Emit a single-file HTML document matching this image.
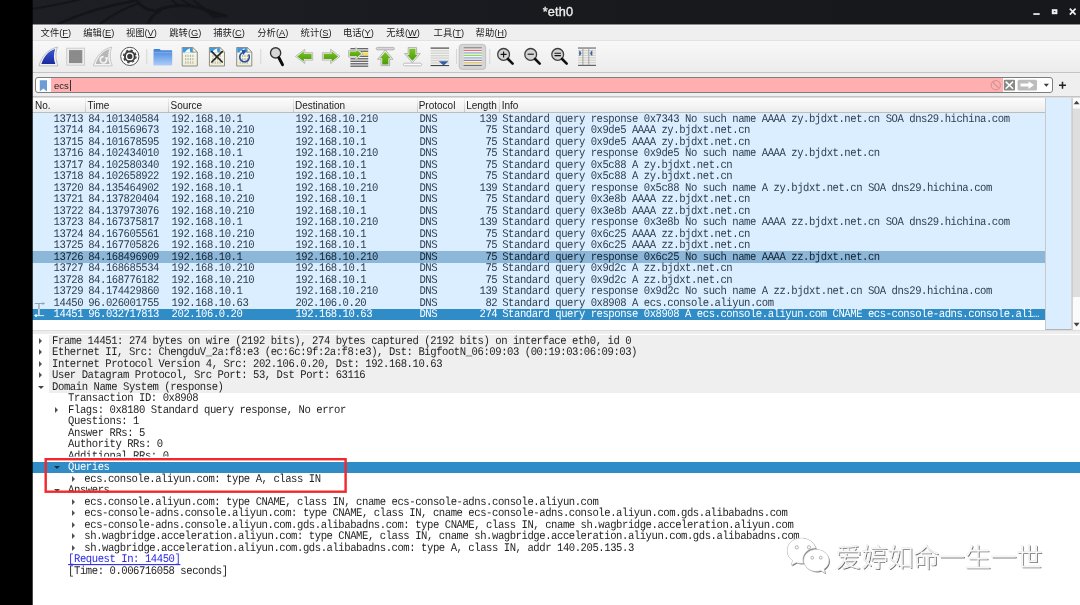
<!DOCTYPE html>
<html lang="zh-CN">
<head>
<meta charset="utf-8">
<title>*eth0</title>
<style>
*{box-sizing:border-box;margin:0;padding:0}
html,body{width:1080px;height:605px;overflow:hidden;background:#fff}
body{position:relative;font-family:"Liberation Sans","Noto Sans CJK SC",sans-serif;font-size:10px;color:#222}
.abs{position:absolute}
#wrap{position:absolute;left:0;top:0;width:1080px;height:605px;will-change:transform}
#black{z-index:50;left:0;top:0;width:33px;height:605px;background:linear-gradient(90deg,#000 0,#000 32px,rgba(0,0,0,.72) 32px,rgba(0,0,0,.72) 33px)}
#title{left:32px;top:0;width:1048px;height:24px;background:linear-gradient(90deg,#1e1f25 0,#1b1c21 300px,#18191d 600px,#17181c 100%);overflow:hidden}
#title .tt{position:absolute;left:506px;top:4px;width:40px;text-align:center;color:#ededed;font-size:12.7px;letter-spacing:0.2px;-webkit-text-stroke:0.35px #ededed;line-height:16px;white-space:nowrap}
#menubar{left:32px;top:24px;width:1048px;height:17px;background:#efefef;border-bottom:1px solid #e2e2e2;box-shadow:inset 0 1px 0 #8b8c90,inset 0 2px 0 #f6f6f6}
#menubar span{position:absolute;top:3px;line-height:13px;font-size:9.3px;white-space:nowrap;color:#1d1d1d;margin-left:-0.4px}
#menubar u{text-decoration-thickness:1px;text-underline-offset:1px}
#toolbar{left:32px;top:41px;width:1048px;height:32px;background:linear-gradient(#f8f8f8,#ececec);border-bottom:1px solid #c4c4c4}
#toolbar svg{position:absolute}
.sep{position:absolute;top:9px;width:1px;height:15px;background:#d2d2d2}
#filterbar{left:32px;top:73px;width:1048px;height:24px;background:#efefef;border-bottom:1px solid #c3c3c3}
#finput{position:absolute;left:3px;top:4px;width:1018px;height:16px;border:1px solid #7d7d7d;border-radius:3px;background:#fff;overflow:hidden}
#finput .pink{position:absolute;left:14.5px;top:0;width:952px;height:14px;background:#ffafaf}
#finput .txt{position:absolute;left:18px;top:1px;line-height:14px;font-size:9.5px;color:#222}
#finput .caret{position:absolute;left:34.2px;top:2px;width:1px;height:10.5px;background:#333}
#list{left:32px;top:97px;width:1048px;height:234px;background:#fff;box-shadow:inset 0 1px 0 #dcdcdc}
#lhead{position:absolute;left:0;top:1px;width:1013px;height:15.3px;background:linear-gradient(#fdfdfd,#ececec);border-bottom:1px solid #bdbdbd}
#lhead span{position:absolute;top:1.7px;line-height:12px;font-size:10px;color:#222;white-space:nowrap}
#lhead i{position:absolute;top:0;width:1px;height:14px;background:linear-gradient(#f4f4f4,#c4c4c4)}
.r{position:absolute;left:32px;width:1013px;height:11.5px;background:#daeeff;font-family:"Liberation Mono",monospace;font-size:10.6px;letter-spacing:-0.458px;line-height:11.5px;color:#2e3e50;white-space:pre}
.r.rel{background:#8cb7d9;color:#12222f}
.r.sel{background:#308cc6;color:#fff}
.r .c{position:absolute;top:1.4px;transform:scaleY(1.1);transform-origin:50% 74%;text-rendering:geometricPrecision}
.no{left:21.6px}.tm{left:56.2px}.sr{left:139.6px}.ds{left:263.4px}.pr{left:387.4px}.ln{right:547.8px}.inf{left:470.2px}
#mini{position:absolute;left:1013px;top:1px;width:26.5px;height:232px;background:#daeeff;border-left:1px solid #c9c9c9;border-bottom:1px solid #b5b5b5;border-right:1px solid #d6d6d6}
#vsb{position:absolute;left:1040px;top:1px;width:8px;height:232px;background:#fff}
#split{left:32px;top:330px;width:1048px;height:5px;background:#ededed;border-top:1px solid #dcdcdc;border-bottom:1px solid #d8d8d8}
#detail{left:32px;top:334px;width:1048px;height:271px;background:#fff}
.d{position:absolute;left:32px;width:1048px;height:11.5px;font-family:"Liberation Mono",monospace;font-size:10.6px;letter-spacing:-0.449px;line-height:11.5px;color:#1f1f1f;white-space:pre}
.d .t{position:absolute;top:1.7px;margin-left:-32.2px;transform:scaleY(1.1);transform-origin:50% 74%;text-rendering:geometricPrecision}
.d.top::before{content:"";position:absolute;left:17px;top:0;right:0;height:12px;background:#efefef}
.d.dsel{background:#308cc6;color:#fff}
.d.lnk{color:#2a2ae8}
.d.lnk .t{text-decoration:underline;text-decoration-thickness:0.9px;text-decoration-skip-ink:none;text-underline-offset:1.6px}
.ar{position:absolute;top:2.9px;margin-left:-32.2px;width:0;height:0;border-left:3.7px solid #505050;border-top:3.2px solid transparent;border-bottom:3.2px solid transparent}
.ad{position:absolute;top:4.6px;margin-left:-32px;width:0;height:0;border-top:3.9px solid #444;border-left:3.5px solid transparent;border-right:3.5px solid transparent}
.dsel .ad{border-top-color:#1c2e3c}
#wm{left:786px;top:538px;width:270px;height:40px}
</style>
</head>
<body>
<div id="wrap">
<div id="black" class="abs"></div>
<div id="title" class="abs">
<svg class="abs" style="left:0;top:0" width="240" height="24" viewBox="32 0 240 24"><g fill="none" stroke="#141519" stroke-linecap="round"><path d="M32 9 C50 6 66 3 82 -1" stroke-width="2.2"/><path d="M58 24 C80 14 104 6 134 1" stroke-width="2.6"/><path d="M100 24 C112 15 124 8 140 3" stroke-width="2.2"/><path d="M136 0 C140 6 146 10 156 11 C168 5 186 4 200 8 C210 11 218 14 226 16" stroke-width="3"/><path d="M148 24 C150 18 154 14 160 11" stroke-width="2.6"/><path d="M172 0 L178 5 M182 0 L190 5 M194 1 L204 8" stroke-width="2"/><path d="M204 10 L224 16 L214 18 Z" fill="#141519" stroke-width="1"/></g></svg>
<div class="tt">*eth0</div>
<svg class="abs" style="left:1000px;top:5px" width="46" height="14" viewBox="0 0 46 14"><rect x="1.3" y="8.2" width="6.4" height="1.7" fill="#f0f0f0"/><rect x="20.8" y="5.2" width="3.6" height="3" fill="none" stroke="#f0f0f0" stroke-width="2"/><path d="M37.8 3.6 L43.6 9.6 M43.6 3.6 L37.8 9.6" stroke="#f0f0f0" stroke-width="1.6" fill="none"/></svg>
</div>
<div id="menubar" class="abs">
<span style="left:9px">文件(<u>F</u>)</span>
<span style="left:51.7px">编辑(<u>E</u>)</span>
<span style="left:94.3px">视图(<u>V</u>)</span>
<span style="left:137.7px">跳转(<u>G</u>)</span>
<span style="left:181.7px">捕获(<u>C</u>)</span>
<span style="left:225.7px">分析(<u>A</u>)</span>
<span style="left:269px">统计(<u>S</u>)</span>
<span style="left:311.3px">电话(<u>Y</u>)</span>
<span style="left:354.7px">无线(<u>W</u>)</span>
<span style="left:402px">工具(<u>T</u>)</span>
<span style="left:444px">帮助(<u>H</u>)</span>
</div>
<div id="toolbar" class="abs">
<svg class="abs" style="left:0;top:0" width="1048" height="32" viewBox="32 41 1048 32">
<defs>
<linearGradient id="gb" x1="0" y1="0" x2="0" y2="1"><stop offset="0" stop-color="#3c57d6"/><stop offset="1" stop-color="#1a2a9c"/></linearGradient>
<linearGradient id="gf" x1="0" y1="0" x2="0" y2="1"><stop offset="0" stop-color="#3b7dd6"/><stop offset="0.25" stop-color="#5b95e2"/><stop offset="1" stop-color="#afcdf8"/></linearGradient>
<linearGradient id="gg" x1="0" y1="0" x2="0" y2="1"><stop offset="0" stop-color="#7cc425"/><stop offset="1" stop-color="#4b9a08"/></linearGradient>
<linearGradient id="gp" x1="0" y1="0" x2="0" y2="1"><stop offset="0" stop-color="#fbfbf0"/><stop offset="1" stop-color="#efeed4"/></linearGradient>
<g id="page">
<path d="M0.5 0.5 H11 L15.6 5 V19 H0.5 Z" fill="url(#gp)" stroke="#8d8d84" stroke-width="1"/>
<path d="M1 1 H10.8 L12.5 5.4 H1 Z" fill="#3d9be2"/>
<path d="M3.2 5.4 C4.5 3.3 6.3 1.9 8.6 1.2 C7.8 2.6 8 4 9 5.4 Z" fill="#fff"/>
<path d="M11 0.5 V5 H15.6 Z" fill="#fdfdf6" stroke="#8d8d84" stroke-width="0.8"/>
<g stroke="#b9b9ae" stroke-width="2.2" stroke-dasharray="1.2 1.2"><path d="M3.4 8.8 H13"/><path d="M3.4 12.2 H13"/><path d="M3.4 15.6 H13"/></g>
</g>
<g id="lens"><circle cx="0" cy="0" r="5.9" fill="#d3d3d3" stroke="#3e3e3e" stroke-width="1.3"/><path d="M4.4 4.6 L9 9.2" stroke="#111" stroke-width="2.6" stroke-linecap="round"/></g>
</defs>
<!-- fin start -->
<path d="M39 65.9 C41.5 56.5 47.5 49.5 57.5 47 C55.2 53 55.4 59.5 58 65.9 Z" fill="#f4f4f4" stroke="#bdbdbd" stroke-width="1"/>
<path d="M41.4 64 C43.6 56.6 48 51.2 55.2 48.9 C53.4 54 53.6 59.4 55.3 64.1 Z" fill="url(#gb)"/>
<!-- stop -->
<rect x="66.7" y="48.2" width="17.8" height="17" fill="#ededed" stroke="#cdcdcd" stroke-width="1"/>
<rect x="69" y="50.1" width="13.3" height="13" fill="#8b8b8b"/>
<!-- restart -->
<path d="M93.3 65.9 C95.8 56.5 101.8 49.5 111.8 47 C109.5 53 109.7 59.5 112.3 65.9 Z" fill="#f4f4f4" stroke="#c6c6c6" stroke-width="1"/>
<path d="M95.7 64 C97.9 56.6 102.3 51.2 109.5 48.9 C107.7 54 107.9 59.4 109.6 64.1 Z" fill="#b7b7b7"/>
<path d="M103.6 56.6 A3.2 3.2 0 1 0 106.6 59.4" fill="none" stroke="#f4f4f4" stroke-width="1.7"/>
<path d="M104.6 57.2 L108.6 57.6 L106.6 60.6 Z" fill="#f4f4f4"/>
<!-- gear -->
<circle cx="129.8" cy="56.4" r="9.1" fill="#fdfdfd" stroke="#555" stroke-width="1"/>
<circle cx="129.8" cy="56.4" r="4.9" fill="none" stroke="#3c3c3c" stroke-width="1.9"/>
<circle cx="129.8" cy="56.4" r="6.2" fill="none" stroke="#3c3c3c" stroke-width="1.3" stroke-dasharray="2.4 2.47"/>
<circle cx="129.8" cy="56.4" r="2.6" fill="#3c3c3c"/>
<rect x="146.3" y="49" width="1" height="15" fill="#d6d6d6"/>
<!-- folder -->
<path d="M153.6 50.2 V49.6 Q153.6 48.9 154.4 48.9 H159.4 Q160 48.9 160.3 49.5 L160.6 50.3 H171.4 Q172.2 50.3 172.2 51.1 V64.8 Q172.2 65.6 171.4 65.6 H154.2 Q153.4 65.6 153.4 64.8 Z" fill="url(#gf)"/>
<path d="M153.6 52.6 H172" stroke="#8fb8ee" stroke-width="0.7"/>
<!-- files -->
<use href="#page" x="181.7" y="47"/>
<use href="#page" x="208.9" y="47"/>
<path d="M211.8 51.6 L222.2 62 M222.2 51.6 L211.8 62" stroke="#262626" stroke-width="1.7" stroke-linecap="round"/>
<use href="#page" x="236.2" y="47"/>
<path d="M243 52.4 A4.8 4.8 0 1 0 248.6 54.4" fill="none" stroke="#2c4f9e" stroke-width="1.6"/>
<path d="M241.2 49.6 L246.4 50.6 L243.4 55 Z" fill="#2c4f9e"/>
<rect x="260.3" y="49" width="1" height="15" fill="#d6d6d6"/>
<!-- find -->
<circle cx="275.6" cy="52.9" r="5.1" fill="#d6d6d6" stroke="#363636" stroke-width="1.4"/>
<path d="M278.9 57.8 L282.5 64.6" stroke="#0c0c0c" stroke-width="3" stroke-linecap="round"/>
<!-- left arrow -->
<path d="M295.4 56.4 L304.8 49.3 V52.7 H312.7 V60.1 H304.8 V63.5 Z" fill="#f2f2f2" stroke="#b4b4b4" stroke-width="0.9" stroke-linejoin="round"/>
<path d="M297.2 56.4 L303.8 51.2 V53.7 H311.6 V59.1 H303.8 V61.6 Z" fill="url(#gg)"/>
<!-- right arrow -->
<path d="M340 56.4 L330.6 49.3 V52.7 H322.4 V60.1 H330.6 V63.5 Z" fill="#f2f2f2" stroke="#b4b4b4" stroke-width="0.9" stroke-linejoin="round"/>
<path d="M338.2 56.4 L331.6 51.2 V53.7 H323.6 V59.1 H331.6 V61.6 Z" fill="url(#gg)"/>
<!-- goto -->
<g stroke="#5c5c5c" stroke-width="1.25"><path d="M350.4 48.7 H368.2"/><path d="M350.4 51.2 H368.2"/><path d="M350.4 56.3 H368.2"/><path d="M350.4 58.8 H368.2"/><path d="M350.4 61.3 H368.2"/><path d="M350.4 63.8 H368.2"/><path d="M350.4 66.2 H368.2"/></g>
<rect x="361" y="52.5" width="7.2" height="2.6" fill="#f4e040"/>
<path d="M363 53.7 L355.6 47.6 V50.4 H348.6 V57 H355.6 V59.8 Z" fill="#f2f2f2" stroke="#b4b4b4" stroke-width="0.9" stroke-linejoin="round"/>
<path d="M361.3 53.7 L356.6 49.6 V51.4 H349.7 V56 H356.6 V57.8 Z" fill="url(#gg)"/>
<!-- top -->
<rect x="376.2" y="47.4" width="18.2" height="2.5" rx="1.2" fill="#d6d6d6" stroke="#a4a4a4" stroke-width="0.7"/>
<path d="M385.3 49.9 L393 59.3 H389.6 V65.6 H381 V59.3 H377.6 Z" fill="#f2f2f2" stroke="#aaaaaa" stroke-width="0.9" stroke-linejoin="round"/>
<path d="M385.3 52 L390.8 58.2 H388.4 V64.5 H382.2 V58.2 H379.8 Z" fill="url(#gg)"/>
<!-- bottom -->
<path d="M412.4 62.8 L420.2 53.6 H416.6 V47.6 H408.2 V53.6 H404.6 Z" fill="#f2f2f2" stroke="#aaaaaa" stroke-width="0.9" stroke-linejoin="round"/>
<path d="M412.4 60.8 L417.8 54.7 H415.5 V48.7 H409.3 V54.7 H407 Z" fill="url(#gg)"/>
<rect x="403.4" y="63.2" width="18.2" height="2.6" rx="1.3" fill="#fbfbfb" stroke="#b0b0b0" stroke-width="0.8"/>
<!-- autoscroll -->
<rect x="430.6" y="47.3" width="18.5" height="1.7" fill="#7d7d7d"/>
<g stroke="#d2d2cc" stroke-width="1.3"><path d="M430.6 50.8 H449.1"/><path d="M430.6 53.2 H449.1"/><path d="M430.6 55.7 H449.1"/><path d="M430.6 58.1 H449.1"/><path d="M430.6 60.5 H449.1"/><path d="M430.6 62.9 H449.1"/></g>
<rect x="430.6" y="65" width="18.5" height="1.1" fill="#444"/>
<path d="M438.8 61.2 H448.4 L443.6 65.6 Z" fill="#2f5fa8"/>
<rect x="456" y="49" width="1" height="15" fill="#d6d6d6"/>
<!-- colorize -->
<rect x="459.2" y="44.4" width="26.4" height="25" rx="3" fill="#d5d5d5" stroke="#bcbcbc" stroke-width="0.9"/>
<rect x="463.6" y="47.1" width="18.2" height="18.7" fill="#f4f4f4"/>
<rect x="463.6" y="47.1" width="18.2" height="1.4" fill="#8c8c8c"/>
<rect x="463.6" y="49.85" width="18.2" height="0.9" fill="#e83b3b"/>
<rect x="463.6" y="52.2" width="18.2" height="1.4" fill="#98b3d8"/>
<rect x="463.6" y="54.85" width="18.2" height="0.9" fill="#73d216"/>
<rect x="463.6" y="57.2" width="18.2" height="1.4" fill="#98b3d8"/>
<rect x="463.6" y="59.85" width="18.2" height="0.9" fill="#75507b"/>
<rect x="463.6" y="62.1" width="18.2" height="1.4" fill="#d9c46c"/>
<rect x="463.6" y="64.85" width="18.2" height="0.9" fill="#444"/>
<rect x="489.2" y="49" width="1" height="15" fill="#d6d6d6"/>
<!-- zooms -->
<use href="#lens" x="503.6" y="54.4"/>
<path d="M500.6 54.4 H506.6 M503.6 51.4 V57.4" stroke="#111" stroke-width="1.1"/>
<use href="#lens" x="530.7" y="54.4"/>
<path d="M527.6 54.2 H533.8" stroke="#111" stroke-width="1.1"/>
<use href="#lens" x="557.7" y="54.4"/>
<path d="M554.5 53.3 H560.9 M554.5 55.6 H560.9" stroke="#111" stroke-width="1.1"/>
<!-- resize cols -->
<rect x="578" y="47.3" width="18" height="1.5" fill="#8a8a8a"/>
<g stroke="#d4d4cc" stroke-width="1.3"><path d="M578 50.6 H596"/><path d="M578 53 H596"/><path d="M578 55.4 H596"/><path d="M578 57.8 H596"/><path d="M578 60.2 H596"/><path d="M578 62.6 H596"/></g>
<rect x="578" y="64.8" width="18" height="1.1" fill="#555"/>
<path d="M582.9 48.5 V65 M588.8 48.5 V65" stroke="#9a9a9a" stroke-width="0.9"/>
<path d="M579.2 50.4 A2.9 2.9 0 0 1 579.2 55.9 Z" fill="#3465a4"/>
<path d="M592.3 50.4 A2.9 2.9 0 0 0 592.3 55.9 Z" fill="#3465a4"/>
</svg>

</div>
<div id="filterbar" class="abs">
<div id="finput">
<div class="pink"></div>
<svg class="abs" style="left:3px;top:1.5px" width="9" height="12" viewBox="0 0 9 12"><path d="M0.8 0.3 H8 V11.6 L4.4 8.6 L0.8 11.6 Z" fill="#6e9dd6"/></svg>
<div class="txt">ecs</div><div class="caret"></div>
<svg class="abs" style="left:953px;top:1px" width="62" height="12" viewBox="0 0 62 12"><circle cx="6.8" cy="6.2" r="4.6" fill="none" stroke="#d49494" stroke-width="1.1"/><path d="M3.6 3 L10 9.4" stroke="#d49494" stroke-width="1.1"/><rect x="14.8" y="0.7" width="11.2" height="10.8" rx="1" fill="#888a85"/><path d="M16.7 2.6 L24.1 9.7 M24.1 2.6 L16.7 9.7" stroke="#fff" stroke-width="1.5"/><rect x="28.6" y="0.7" width="19.4" height="10.8" rx="1.5" fill="#bdbdbd"/><path d="M31.5 4.6 H39.5 V2.3 L45 6.1 L39.5 9.9 V7.6 H31.5 Z" fill="#fff"/><path d="M54.7 4.8 H60 L57.35 7.8 Z" fill="#3c3c3c"/></svg>
</div>
<svg class="abs" style="left:1026px;top:7.5px" width="9" height="9" viewBox="0 0 9 9"><path d="M4.5 0.8 V7.8 M1 4.3 H8" stroke="#222" stroke-width="1.5"/></svg>
</div>
<div id="list" class="abs">
<div id="lhead">
<span style="left:3px">No.</span><i style="left:53px"></i>
<span style="left:55.5px">Time</span><i style="left:136px"></i>
<span style="left:138.5px">Source</span><i style="left:260.5px"></i>
<span style="left:263px">Destination</span><i style="left:384.5px"></i>
<span style="left:386.7px">Protocol</span><i style="left:432px"></i>
<span style="left:434.2px">Length</span><i style="left:467px"></i>
<span style="left:469.7px">Info</span>
</div>
<div id="mini"></div>
<div id="vsb">
<svg class="abs" style="left:0;top:0" width="8" height="232" viewBox="0 0 8 232"><rect x="0" y="0" width="8" height="232" fill="#fbfbfb"/><rect x="0" y="10.5" width="8" height="188.5" fill="#dedede"/><rect x="0" y="0" width="0.8" height="232" fill="#c8c8c8"/><path d="M1.6 6.2 L7.6 6.2 L4.6 2.8 Z" fill="#444"/><path d="M1.6 224.8 L7.6 224.8 L4.6 228.4 Z" fill="#444"/></svg>
</div>
</div>
<div class="r" style="top:113.3px"><span class="c no">13713</span><span class="c tm">84.101340584</span><span class="c sr">192.168.10.1</span><span class="c ds">192.168.10.210</span><span class="c pr">DNS</span><span class="c ln">139</span><span class="c inf">Standard query response 0x7343 No such name AAAA zy.bjdxt.net.cn SOA dns29.hichina.com</span></div>
<div class="r" style="top:124.8px"><span class="c no">13714</span><span class="c tm">84.101569673</span><span class="c sr">192.168.10.210</span><span class="c ds">192.168.10.1</span><span class="c pr">DNS</span><span class="c ln">75</span><span class="c inf">Standard query 0x9de5 AAAA zy.bjdxt.net.cn</span></div>
<div class="r" style="top:136.3px"><span class="c no">13715</span><span class="c tm">84.101678595</span><span class="c sr">192.168.10.210</span><span class="c ds">192.168.10.1</span><span class="c pr">DNS</span><span class="c ln">75</span><span class="c inf">Standard query 0x9de5 AAAA zy.bjdxt.net.cn</span></div>
<div class="r" style="top:147.8px"><span class="c no">13716</span><span class="c tm">84.102434010</span><span class="c sr">192.168.10.1</span><span class="c ds">192.168.10.210</span><span class="c pr">DNS</span><span class="c ln">75</span><span class="c inf">Standard query response 0x9de5 No such name AAAA zy.bjdxt.net.cn</span></div>
<div class="r" style="top:159.3px"><span class="c no">13717</span><span class="c tm">84.102580340</span><span class="c sr">192.168.10.210</span><span class="c ds">192.168.10.1</span><span class="c pr">DNS</span><span class="c ln">75</span><span class="c inf">Standard query 0x5c88 A zy.bjdxt.net.cn</span></div>
<div class="r" style="top:170.8px"><span class="c no">13718</span><span class="c tm">84.102658922</span><span class="c sr">192.168.10.210</span><span class="c ds">192.168.10.1</span><span class="c pr">DNS</span><span class="c ln">75</span><span class="c inf">Standard query 0x5c88 A zy.bjdxt.net.cn</span></div>
<div class="r" style="top:182.3px"><span class="c no">13720</span><span class="c tm">84.135464902</span><span class="c sr">192.168.10.1</span><span class="c ds">192.168.10.210</span><span class="c pr">DNS</span><span class="c ln">139</span><span class="c inf">Standard query response 0x5c88 No such name A zy.bjdxt.net.cn SOA dns29.hichina.com</span></div>
<div class="r" style="top:193.8px"><span class="c no">13721</span><span class="c tm">84.137820404</span><span class="c sr">192.168.10.210</span><span class="c ds">192.168.10.1</span><span class="c pr">DNS</span><span class="c ln">75</span><span class="c inf">Standard query 0x3e8b AAAA zz.bjdxt.net.cn</span></div>
<div class="r" style="top:205.3px"><span class="c no">13722</span><span class="c tm">84.137973076</span><span class="c sr">192.168.10.210</span><span class="c ds">192.168.10.1</span><span class="c pr">DNS</span><span class="c ln">75</span><span class="c inf">Standard query 0x3e8b AAAA zz.bjdxt.net.cn</span></div>
<div class="r" style="top:216.8px"><span class="c no">13723</span><span class="c tm">84.167375817</span><span class="c sr">192.168.10.1</span><span class="c ds">192.168.10.210</span><span class="c pr">DNS</span><span class="c ln">139</span><span class="c inf">Standard query response 0x3e8b No such name AAAA zz.bjdxt.net.cn SOA dns29.hichina.com</span></div>
<div class="r" style="top:228.3px"><span class="c no">13724</span><span class="c tm">84.167605561</span><span class="c sr">192.168.10.210</span><span class="c ds">192.168.10.1</span><span class="c pr">DNS</span><span class="c ln">75</span><span class="c inf">Standard query 0x6c25 AAAA zz.bjdxt.net.cn</span></div>
<div class="r" style="top:239.8px"><span class="c no">13725</span><span class="c tm">84.167705826</span><span class="c sr">192.168.10.210</span><span class="c ds">192.168.10.1</span><span class="c pr">DNS</span><span class="c ln">75</span><span class="c inf">Standard query 0x6c25 AAAA zz.bjdxt.net.cn</span></div>
<div class="r rel" style="top:251.3px"><span class="c no">13726</span><span class="c tm">84.168496909</span><span class="c sr">192.168.10.1</span><span class="c ds">192.168.10.210</span><span class="c pr">DNS</span><span class="c ln">75</span><span class="c inf">Standard query response 0x6c25 No such name AAAA zz.bjdxt.net.cn</span></div>
<div class="r" style="top:262.8px"><span class="c no">13727</span><span class="c tm">84.168685534</span><span class="c sr">192.168.10.210</span><span class="c ds">192.168.10.1</span><span class="c pr">DNS</span><span class="c ln">75</span><span class="c inf">Standard query 0x9d2c A zz.bjdxt.net.cn</span></div>
<div class="r" style="top:274.3px"><span class="c no">13728</span><span class="c tm">84.168776182</span><span class="c sr">192.168.10.210</span><span class="c ds">192.168.10.1</span><span class="c pr">DNS</span><span class="c ln">75</span><span class="c inf">Standard query 0x9d2c A zz.bjdxt.net.cn</span></div>
<div class="r" style="top:285.8px"><span class="c no">13729</span><span class="c tm">84.174429860</span><span class="c sr">192.168.10.1</span><span class="c ds">192.168.10.210</span><span class="c pr">DNS</span><span class="c ln">139</span><span class="c inf">Standard query response 0x9d2c No such name A zz.bjdxt.net.cn SOA dns29.hichina.com</span></div>
<div class="r" style="top:297.3px"><span class="c no">14450</span><span class="c tm">96.026001755</span><span class="c sr">192.168.10.63</span><span class="c ds">202.106.0.20</span><span class="c pr">DNS</span><span class="c ln">82</span><span class="c inf">Standard query 0x8908 A ecs.console.aliyun.com</span></div>
<div class="r sel" style="top:308.8px"><span class="c no">14451</span><span class="c tm">96.032717813</span><span class="c sr">202.106.0.20</span><span class="c ds">192.168.10.63</span><span class="c pr">DNS</span><span class="c ln">274</span><span class="c inf">Standard query response 0x8908 A ecs.console.aliyun.com CNAME ecs-console-adns.console.ali…</span></div>
<svg class="abs" style="left:33px;top:300px" width="13" height="20" viewBox="0 0 13 20"><path d="M5.9 3.5 V9" stroke="#a9b5c1" stroke-width="1.8"/><path d="M5.9 9 V15.6" stroke="#c2d8ea" stroke-width="1.8"/><path d="M1.8 3.5 H10.5" stroke="#98a3ae" stroke-width="1"/><path d="M9.4 2 L12.2 3.5 L9.4 5 Z" fill="#98a3ae"/><path d="M2 15.6 H11.2" stroke="#d6e8f6" stroke-width="1.1"/><path d="M3.6 14 L0.9 15.6 L3.6 17.2 Z" fill="#fff"/><circle cx="3.2" cy="15.6" r="1.1" fill="#fff"/></svg>
<div id="split" class="abs"></div>
<div id="detail" class="abs"></div>
<div class="d top" style="top:335.10px"><i class="ar" style="left:39.0px"></i><span class="t" style="left:52.3px">Frame 14451: 274 bytes on wire (2192 bits), 274 bytes captured (2192 bits) on interface eth0, id 0</span></div>
<div class="d top" style="top:346.60px"><i class="ar" style="left:39.0px"></i><span class="t" style="left:52.3px">Ethernet II, Src: ChengduV_2a:f8:e3 (ec:6c:9f:2a:f8:e3), Dst: BigfootN_06:09:03 (00:19:03:06:09:03)</span></div>
<div class="d top" style="top:358.10px"><i class="ar" style="left:39.0px"></i><span class="t" style="left:52.3px">Internet Protocol Version 4, Src: 202.106.0.20, Dst: 192.168.10.63</span></div>
<div class="d top" style="top:369.60px"><i class="ar" style="left:39.0px"></i><span class="t" style="left:52.3px">User Datagram Protocol, Src Port: 53, Dst Port: 63116</span></div>
<div class="d top" style="top:381.10px"><i class="ad" style="left:37.5px"></i><span class="t" style="left:52.3px">Domain Name System (response)</span></div>
<div class="d " style="top:392.60px"><span class="t" style="left:68.3px">Transaction ID: 0x8908</span></div>
<div class="d " style="top:404.10px"><i class="ar" style="left:55.5px"></i><span class="t" style="left:68.3px">Flags: 0x8180 Standard query response, No error</span></div>
<div class="d " style="top:415.60px"><span class="t" style="left:68.3px">Questions: 1</span></div>
<div class="d " style="top:427.10px"><span class="t" style="left:68.3px">Answer RRs: 5</span></div>
<div class="d " style="top:438.60px"><span class="t" style="left:68.3px">Authority RRs: 0</span></div>
<div class="d " style="top:450.10px"><span class="t" style="left:68.3px">Additional RRs: 0</span></div>
<div class="d dsel" style="top:461.60px"><i class="ad" style="left:54px"></i><span class="t" style="left:68.3px">Queries</span></div>
<div class="d " style="top:473.10px"><i class="ar" style="left:72.0px"></i><span class="t" style="left:84.5px">ecs.console.aliyun.com: type A, class IN</span></div>
<div class="d " style="top:484.60px"><i class="ad" style="left:54px"></i><span class="t" style="left:68.3px">Answers</span></div>
<div class="d " style="top:496.10px"><i class="ar" style="left:72.0px"></i><span class="t" style="left:84.5px">ecs.console.aliyun.com: type CNAME, class IN, cname ecs-console-adns.console.aliyun.com</span></div>
<div class="d " style="top:507.60px"><i class="ar" style="left:72.0px"></i><span class="t" style="left:84.5px">ecs-console-adns.console.aliyun.com: type CNAME, class IN, cname ecs-console-adns.console.aliyun.com.gds.alibabadns.com</span></div>
<div class="d " style="top:519.10px"><i class="ar" style="left:72.0px"></i><span class="t" style="left:84.5px">ecs-console-adns.console.aliyun.com.gds.alibabadns.com: type CNAME, class IN, cname sh.wagbridge.acceleration.aliyun.com</span></div>
<div class="d " style="top:530.60px"><i class="ar" style="left:72.0px"></i><span class="t" style="left:84.5px">sh.wagbridge.acceleration.aliyun.com: type CNAME, class IN, cname sh.wagbridge.acceleration.aliyun.com.gds.alibabadns.com</span></div>
<div class="d " style="top:542.10px"><i class="ar" style="left:72.0px"></i><span class="t" style="left:84.5px">sh.wagbridge.acceleration.aliyun.com.gds.alibabadns.com: type A, class IN, addr 140.205.135.3</span></div>
<div class="d lnk" style="top:553.60px"><span class="t" style="left:68.3px">[Request In: 14450]</span></div>
<div class="d " style="top:565.10px"><span class="t" style="left:68.3px">[Time: 0.006716058 seconds]</span></div>
<svg class="abs" style="left:40px;top:452px" width="312" height="46" viewBox="40 452 312 46"><rect x="44.5" y="456.6" width="302.3" height="1.6" fill="#fff"/><rect x="44.5" y="492.7" width="302.3" height="1.6" fill="#fff"/><rect x="45.7" y="459.2" width="299.9" height="32.5" fill="none" stroke="#f2292c" stroke-width="2.4"/></svg>
<div id="wm" class="abs">
<svg class="abs" style="left:-2.1px;top:-3.9px" width="49.5" height="44.4" viewBox="0 0 48 40" preserveAspectRatio="none">
<g id="wx"><path d="M17 3.5 C9 3.5 3 8.6 3 15 C3 18.6 5 21.8 8.2 23.8 L7 28.2 L11.8 25.6 C13.4 26.1 15.1 26.4 17 26.4 C17.6 26.4 18.2 26.4 18.8 26.3 C18.4 25.3 18.2 24.3 18.2 23.2 C18.2 17.4 23.8 12.8 30.8 12.7 C29.4 7.4 23.8 3.5 17 3.5 Z"/><path d="M31.5 14 C24.6 14 19.2 18.3 19.2 23.8 C19.2 29.3 24.6 33.6 31.5 33.6 C33 33.6 34.4 33.4 35.7 33 L39.8 35.3 L38.8 31.6 C41.6 29.8 43.6 27 43.6 23.8 C43.6 18.3 38.4 14 31.5 14 Z"/></g>
<use href="#wx" fill="#7c7c7c" transform="translate(1,1)"/>
<use href="#wx" fill="#fff" stroke="#dcdcdc" stroke-width="0.5"/>
<g fill="#fff" stroke="#9a9a9a" stroke-width="0.7"><circle cx="12.4" cy="12" r="1.5"/><circle cx="24.2" cy="12" r="1.5"/><circle cx="27.4" cy="21.4" r="1.3"/><circle cx="35.6" cy="21.4" r="1.3"/></g></svg>
<svg class="abs" style="left:46px;top:0" width="224" height="40" viewBox="0 0 224 40"><g font-family="'Liberation Sans','Noto Sans CJK SC',sans-serif" font-size="26.3" font-weight="300"><text x="4.6" y="29.8" fill="#6c6c6c" textLength="207" lengthAdjust="spacing">爱婷如命一生一世</text><text x="3.6" y="28.8" fill="#fff" stroke="#e4e4e4" stroke-width="0.4" textLength="207" lengthAdjust="spacing">爱婷如命一生一世</text></g></svg>
</div>
</div>
</body>
</html>
